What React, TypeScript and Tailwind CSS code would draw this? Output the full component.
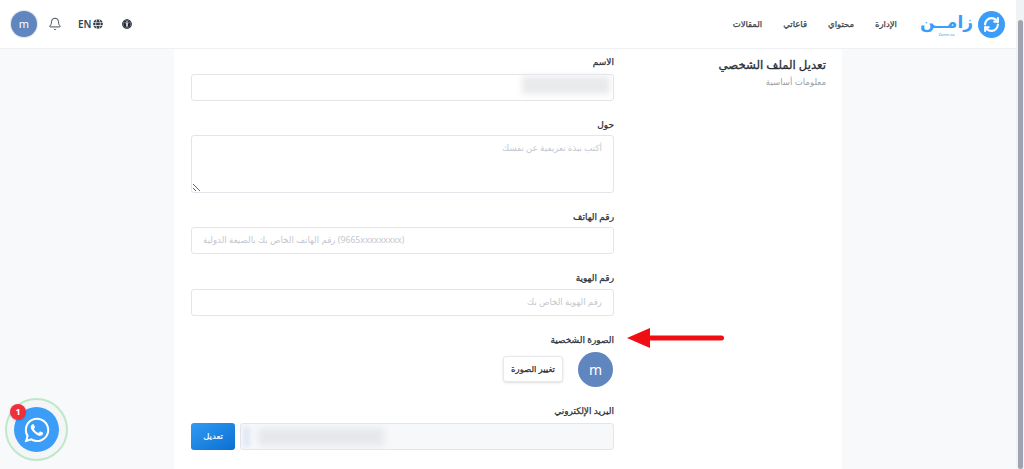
import { Bell, RefreshCw } from 'lucide-react';
import type { ReactNode } from 'react';
import { FaGlobe, FaUniversalAccess, FaWhatsapp } from 'react-icons/fa';

const navLinks = ['الإدارة', 'محتواي', 'قاعاتي', 'المقالات'];

function Field({ label, gap = 'gap-[3px]', children }: { label: string; gap?: string; children: ReactNode }) {
  return (
    <div className={`flex flex-col ${gap}`}>
      <label className="text-[9px] leading-[14px] font-normal text-[#2b2f38] [-webkit-text-stroke:0.25px_#2b2f38]">{label}</label>
      {children}
    </div>
  );
}

function TextInput({ placeholder, className = '' }: { placeholder?: string; className?: string }) {
  return (
    <input
      placeholder={placeholder}
      className={`h-[27px] w-full rounded-[3px] border border-[#e3e5ea] bg-white px-[11px] text-[8.7px] placeholder:text-[#c3c7cf] ${className}`}
    />
  );
}

function Avatar({ size }: { size: string }) {
  return (
    <div className={`flex shrink-0 items-center justify-center rounded-full bg-[#5f86bf] text-white ${size}`}>m</div>
  );
}

export default function App() {
  return (
    <div dir="ltr" className="relative flex h-[469px] w-[1024px] overflow-hidden bg-white font-['Noto_Sans','DejaVu_Sans',sans-serif]">
      <div className="flex min-w-0 flex-1 flex-col">
        <header className="flex h-[49px] shrink-0 items-center justify-between border-b border-[#eef0f3] bg-white px-[11px]">
          <div className="flex items-center">
            <Avatar size="h-[26px] w-[26px] text-[11px] shadow-[0_0_0_1px_#dfe5ef]" />
            <Bell className="ml-[11px] h-[14px] w-[14px] text-[#3a3f49]" strokeWidth={1.6} />
            <div className="ml-[16px] flex items-center gap-[1px] text-[10px] font-semibold text-[#3a3f49]">
              <span>EN</span>
              <FaGlobe className="h-[10px] w-[10px]" />
            </div>
            <FaUniversalAccess className="ml-[19px] h-[10px] w-[10px] text-[#1f2530]" />
          </div>
          <div className="flex items-center">
            <nav dir="rtl" className="flex flex-row-reverse items-center gap-[21px] text-[8.5px] font-normal text-[#3a3f49] [-webkit-text-stroke:0.25px_#3a3f49]">
              {[...navLinks].reverse().map((item) => (
                <a key={item}>{item}</a>
              ))}
            </nav>
            <div className="ml-[23px] flex items-center gap-[5px]">
              <div className="flex flex-col items-center">
                <span dir="rtl" className="text-[17px] leading-[20px] font-bold text-[#3b9df8]">زامــن</span>
                <span className="text-[4px] leading-[5px] text-[#3b9df8]">Zamn.sa</span>
              </div>
              <div className="flex h-[27px] w-[27px] items-center justify-center rounded-full bg-[#3b9df8]">
                <RefreshCw className="h-[17px] w-[17px] text-white" strokeWidth={3} />
              </div>
            </div>
          </div>
        </header>

        <div className="flex flex-1 bg-[#f8f9fb] px-[174px]">
          <main dir="rtl" className="flex flex-1 gap-[14px] overflow-hidden bg-white pt-[6px] pr-[16px]">
            <aside className="w-[198px] shrink-0">
              <h2 className="text-[11.7px] leading-[18px] font-normal text-[#2b2f38] [-webkit-text-stroke:0.3px_#2b2f38]">تعديل الملف الشخصي</h2>
              <p className="mt-[2px] text-[8.6px] leading-[14px] text-[#9a9ea7]">معلومات أساسية</p>
            </aside>
            <form className="flex w-[423px] shrink-0 flex-col gap-[17px]">
              <Field label="الاسم">
                <div className="relative">
                  <TextInput />
                  <div className="absolute top-[4px] right-[4px] h-[18px] w-[88px] bg-[#e9eaec] blur-[3px]" />
                </div>
              </Field>
              <Field label="حول">
                <textarea
                  placeholder="أكتب نبذة تعريفية عن نفسك"
                  className="h-[58px] w-full rounded-[3px] border border-[#e3e5ea] bg-white px-[11px] py-[6px] text-[8.7px] placeholder:text-[#c3c7cf]"
                />
              </Field>
              <Field label="رقم الهاتف">
                <TextInput className="text-left" placeholder="(9665xxxxxxxxx) رقم الهاتف الخاص بك بالصيغة الدولية" />
              </Field>
              <Field label="رقم الهوية" gap="gap-[4px]">
                <TextInput placeholder="رقم الهوية الخاص بك" />
              </Field>
              <Field label="الصورة الشخصية" gap="gap-[5px]">
                <div className="flex items-center gap-[15px] pr-[1px]">
                  <Avatar size="h-[35px] w-[35px] text-[14px]" />
                  <button type="button" className="h-[26px] w-[60px] rounded-[3px] border border-[#e6e8ec] bg-white text-[8.5px] whitespace-nowrap text-[#2b2f38] shadow-sm [-webkit-text-stroke:0.25px_#2b2f38]">
                    تغيير الصورة
                  </button>
                </div>
              </Field>
              <Field label="البريد الإلكتروني" gap="gap-[5px]">
                <div className="flex gap-[5px]">
                  <div className="relative h-[27px] flex-1 overflow-hidden rounded-[3px] border border-[#e3e5ea] bg-[#f7f8fa]">
                    <div className="absolute top-[3px] left-[2px] h-[20px] w-[7px] bg-[#dfe8f5] blur-[2px]" />
                    <div className="absolute top-[4px] left-[17px] h-[18px] w-[126px] bg-[#e6e8eb] blur-[3px]" />
                  </div>
                  <button type="button" className="h-[27px] w-[44px] rounded-[3px] bg-gradient-to-br from-[#2f9bf5] to-[#0a6fd1] text-[8.5px] text-white [-webkit-text-stroke:0.2px_#ffffff]">
                    تعديل
                  </button>
                </div>
              </Field>
            </form>
          </main>
        </div>
      </div>

      <div className="flex w-[8px] shrink-0 flex-col items-center bg-[#f1f2f4] pt-[20px]">
        <div className="h-[449px] w-[5px] rounded-full bg-[#9fa4b0]" />
      </div>

      {/* red arrow drawn over the page */}
      <svg className="absolute top-[325px] left-[624px]" width="104" height="26" viewBox="0 0 104 26">
        <path d="M3 13 L26 3 V10.5 H97.5 a2.5 2.5 0 0 1 0 5 H26 V23 Z" fill="#f20d12" />
      </svg>

      {/* whatsapp floating button */}
      <div className="absolute top-[398px] left-[5px] flex h-[63px] w-[63px] items-center justify-center rounded-full border-2 border-[#bfe8cb] bg-[#f4f5f6]">
        <div className="flex h-[45px] w-[45px] items-center justify-center rounded-full bg-[#3b9df8]">
          <FaWhatsapp className="h-[28px] w-[28px] text-white" />
        </div>
        <span className="absolute top-[4px] left-[3px] flex h-[16px] w-[16px] items-center justify-center rounded-full bg-[#ef2f3c] text-[9px] font-bold text-white shadow">1</span>
      </div>
    </div>
  );
}
